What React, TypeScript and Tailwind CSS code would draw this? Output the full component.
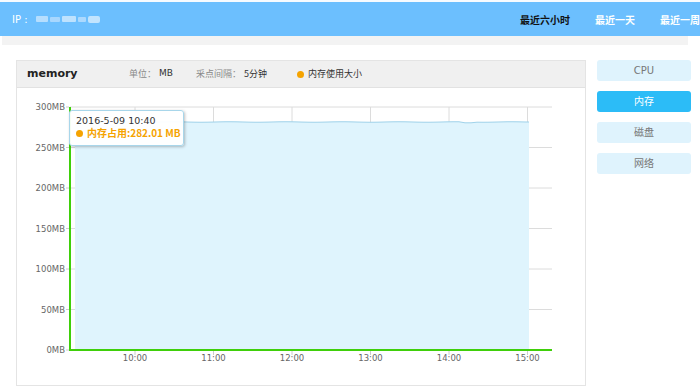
import React from 'react';

const yTicks = [300, 250, 200, 150, 100, 50, 0];
const xTicks = ['10:00', '11:00', '12:00', '13:00', '14:00', '15:00'];
const tabs = ['CPU', '内存', '磁盘', '网络'];

// chart geometry, svg space (origin at panel body top-left)
const PL = 53;
const PR = 535;
const PT = 19;
const PB = 262;
const xAt = (i: number) => 118 + i * 78.5;
const yAt = (v: number) => PB - (v / 300) * (PB - PT);

const buildLine = () => {
  const pts: string[] = [];
  for (let x = 58; x <= 512; x += 6) {
    let y = 34 + Math.sin(x / 9) * 0.25;
    if (x > 446 && x < 458) y = 34.8;
    pts.push(`${x},${y.toFixed(2)}`);
  }
  pts.push('512,34');
  return pts;
};

const MemoryChart: React.FC = () => {
  const line = buildLine();
  return (
    <svg width={568} height={297} className="block">
      {/* grid */}
      {yTicks.map((v) => (
        <line key={v} x1={PL} x2={PR} y1={yAt(v)} y2={yAt(v)} stroke="#dcdcdc" strokeWidth={1} />
      ))}
      {xTicks.map((t, i) => (
        <line key={t} x1={xAt(i)} x2={xAt(i)} y1={PT} y2={PB} stroke="#dcdcdc" strokeWidth={1} />
      ))}
      {/* area */}
      <polygon points={`58,${PB} ${line.join(' ')} 512,${PB}`} fill="#dff4fd" />
      <polyline points={line.join(' ')} fill="none" stroke="#9fd2ea" strokeWidth={1} />
      {/* axes */}
      <line x1={PL} x2={PL} y1={PT} y2={PB + 1} stroke="#3fcf0a" strokeWidth={2} />
      <line x1={PL} x2={PR} y1={PB} y2={PB} stroke="#3fcf0a" strokeWidth={2} />
      {yTicks.map((v) => (
        <g key={v}>
          <line x1={49} x2={52} y1={yAt(v)} y2={yAt(v)} stroke="#cccccc" />
          <text x={48} y={yAt(v) + 3} textAnchor="end" fontSize={8.5} fill="#666" fontFamily="'DejaVu Sans', sans-serif">
            {v}MB
          </text>
        </g>
      ))}
      {xTicks.map((t, i) => (
        <g key={t}>
          <line x1={xAt(i)} x2={xAt(i)} y1={PB + 1} y2={PB + 5} stroke="#cccccc" />
          <text x={xAt(i)} y={PB + 11} textAnchor="middle" fontSize={8.5} fill="#666" fontFamily="'DejaVu Sans', sans-serif">
            {t}
          </text>
        </g>
      ))}
    </svg>
  );
};

export default function App() {
  return (
    <div className="w-[700px] h-[387px] bg-white overflow-hidden font-['DejaVu_Sans','Noto_Sans_CJK_SC',sans-serif]">
      <div className="h-[2px] bg-[#f7fbff]" />
      <header className="h-[34px] bg-[#6cbffe] flex items-center pl-3">
        <div className="flex items-center text-white text-[10px]">
          <span>IP :</span>
          <div className="ml-[8px] flex items-center gap-[2px] opacity-80">
            <span className="w-[12px] h-[6px] bg-[#c9e6ff] rounded-[1px]" />
            <span className="w-[10px] h-[5px] bg-[#b8defe] rounded-[1px]" />
            <span className="w-[14px] h-[6px] bg-[#d3ebff] rounded-[1px]" />
            <span className="w-[8px] h-[5px] bg-[#bde0fe] rounded-[1px]" />
            <span className="w-[12px] h-[7px] bg-[#d8eeff] rounded-[2px]" />
          </div>
        </div>
        <nav className="ml-auto flex items-center text-[10px] font-['Noto_Sans_CJK_SC',sans-serif]">
          <span className="w-[60px] font-bold text-[#111]">最近六小时</span>
          <span className="ml-[15px] w-[50px] text-white font-bold">最近一天</span>
          <span className="ml-[15px] w-[40px] text-white font-bold whitespace-nowrap">最近一周</span>
        </nav>
      </header>
      <div className="h-[9px] ml-[2px] w-[686px] bg-[#f3f3f3]" />
      <div className="flex pl-4 pt-[15px]">
        <section className="w-[570px] h-[326px] border border-[#e4e4e4] flex flex-col">
          <div className="h-[27px] bg-[#f0f0f0] border-b border-[#e2e2e2] flex items-center pl-[10px] text-[9px]">
            <span className="w-[102px] text-[11px] font-bold text-[#222]">memory</span>
            <span className="text-[#888] font-['Noto_Sans_CJK_SC',sans-serif]">单位：</span>
            <span className="ml-[3px] text-[#333]">MB</span>
            <span className="ml-[23px] text-[#888] font-['Noto_Sans_CJK_SC',sans-serif]">采点间隔：</span>
            <span className="ml-[3px] text-[#333] font-['Noto_Sans_CJK_SC',sans-serif]">5分钟</span>
            <span className="ml-[30px] w-[7px] h-[7px] rounded-full bg-[#f5a300]" />
            <span className="ml-[4px] text-[#333] font-['Noto_Sans_CJK_SC',sans-serif]">内存使用大小</span>
          </div>
          <div className="relative flex-1">
            <MemoryChart />
            <div className="absolute left-[52px] top-[22px] w-[115px] h-[36px] bg-white/95 border border-[#a8d6ea] rounded-[3px] shadow-[1px_1px_3px_rgba(0,0,0,0.25)] pl-[6px] pt-[4px] leading-[12px]">
              <div className="text-[9.5px] text-[#333]">2016-5-09 10:40</div>
              <div className="flex items-center text-[10px] font-bold text-[#f5a300] font-['Noto_Sans_CJK_SC',sans-serif]">
                <span className="w-[7px] h-[7px] rounded-full bg-[#f5a300] mr-[4px]" />
                内存占用:282.01 MB
              </div>
            </div>
          </div>
        </section>
        <aside className="ml-[11px] w-[94px] flex flex-col gap-[10px]">
          {tabs.map((t) => (
            <button
              key={t}
              className={`h-[21px] rounded-[3px] text-[10px] font-['DejaVu_Sans','Noto_Sans_CJK_SC',sans-serif] ${
                t === '内存' ? 'bg-[#2cbcf7] text-white' : 'bg-[#dff3fd] text-[#777]'
              }`}
            >
              {t}
            </button>
          ))}
        </aside>
      </div>
    </div>
  );
}
